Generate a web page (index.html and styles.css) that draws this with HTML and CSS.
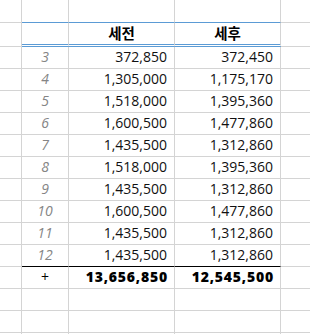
FILE: index.html
```html
<!DOCTYPE html>
<html>
<head>
<meta charset="utf-8">
<link rel="stylesheet" href="styles.css">
</head>
<body>
<div class="sheet">
  <div class="row r-top">
    <div class="c a"></div><div class="c b top-blue"></div><div class="c v top-blue"></div><div class="c v top-blue"></div><div class="c e"></div>
  </div>
  <div class="row r-head">
    <div class="c a"></div><div class="c b head"></div><div class="c v head hd">세전</div><div class="c v head hd">세후</div><div class="c e"></div>
  </div>
  <div class="row"><div class="c a"></div><div class="c b idx">3</div><div class="c v num">372,850</div><div class="c v num">372,450</div><div class="c e"></div></div>
  <div class="row"><div class="c a"></div><div class="c b idx">4</div><div class="c v num">1,305,000</div><div class="c v num">1,175,170</div><div class="c e"></div></div>
  <div class="row"><div class="c a"></div><div class="c b idx">5</div><div class="c v num">1,518,000</div><div class="c v num">1,395,360</div><div class="c e"></div></div>
  <div class="row"><div class="c a"></div><div class="c b idx">6</div><div class="c v num">1,600,500</div><div class="c v num">1,477,860</div><div class="c e"></div></div>
  <div class="row"><div class="c a"></div><div class="c b idx">7</div><div class="c v num">1,435,500</div><div class="c v num">1,312,860</div><div class="c e"></div></div>
  <div class="row"><div class="c a"></div><div class="c b idx">8</div><div class="c v num">1,518,000</div><div class="c v num">1,395,360</div><div class="c e"></div></div>
  <div class="row"><div class="c a"></div><div class="c b idx">9</div><div class="c v num">1,435,500</div><div class="c v num">1,312,860</div><div class="c e"></div></div>
  <div class="row"><div class="c a"></div><div class="c b idx">10</div><div class="c v num">1,600,500</div><div class="c v num">1,477,860</div><div class="c e"></div></div>
  <div class="row"><div class="c a"></div><div class="c b idx">11</div><div class="c v num">1,435,500</div><div class="c v num">1,312,860</div><div class="c e"></div></div>
  <div class="row"><div class="c a"></div><div class="c b idx last">12</div><div class="c v num last">1,435,500</div><div class="c v num last">1,312,860</div><div class="c e"></div></div>
  <div class="row"><div class="c a"></div><div class="c b plus">+</div><div class="c v num total">13,656,850</div><div class="c v num total">12,545,500</div><div class="c e"></div></div>
  <div class="row"><div class="c a"></div><div class="c b"></div><div class="c v"></div><div class="c v"></div><div class="c e"></div></div>
  <div class="row"><div class="c a"></div><div class="c b"></div><div class="c v"></div><div class="c v"></div><div class="c e"></div></div>
  <div class="row"><div class="c a"></div><div class="c b"></div><div class="c v"></div><div class="c v"></div><div class="c e"></div></div>
</div>
</body>
</html>
```
FILE: styles.css
```css
html, body {
  margin: 0;
  padding: 0;
  background: #ffffff;
}
body {
  width: 310px;
  height: 334px;
  overflow: hidden;
  font-family: "Open Sans", "Noto Sans CJK KR", sans-serif;
  font-size: 14px;
  color: #111111;
}
.sheet {
  display: flex;
  flex-direction: column;
}
.row {
  display: flex;
  height: 22px;
  flex: none;
}
.r-top { height: 23px; }
.r-head { height: 24px; }
.c {
  box-sizing: border-box;
  border-right: 1px solid #d4d4d4;
  border-bottom: 1px solid #d4d4d4;
  line-height: 20px;
  white-space: nowrap;
  overflow: hidden;
  flex: none;
}
.a { width: 22px; }
.b { width: 47px; text-align: center; }
.v { width: 106px; }
.e { width: 40px; }
.top-blue { border-bottom-color: #5b9bd5; }
.head { border-bottom: 3px double #5b9bd5; }
.hd {
  text-align: center;
  font-weight: 700;
  line-height: 21px;
  font-size: 14.5px;
  color: #000000;
}
.idx {
  font-style: italic;
  color: #858585;
}
.num {
  text-align: right;
  padding-right: 7px;
}
.last { border-bottom-color: #000000; }
.total {
  font-weight: 800;
  color: #000000;
  letter-spacing: 0.8px;
  padding-right: 6px;
}
.plus { color: #000000; }
```
